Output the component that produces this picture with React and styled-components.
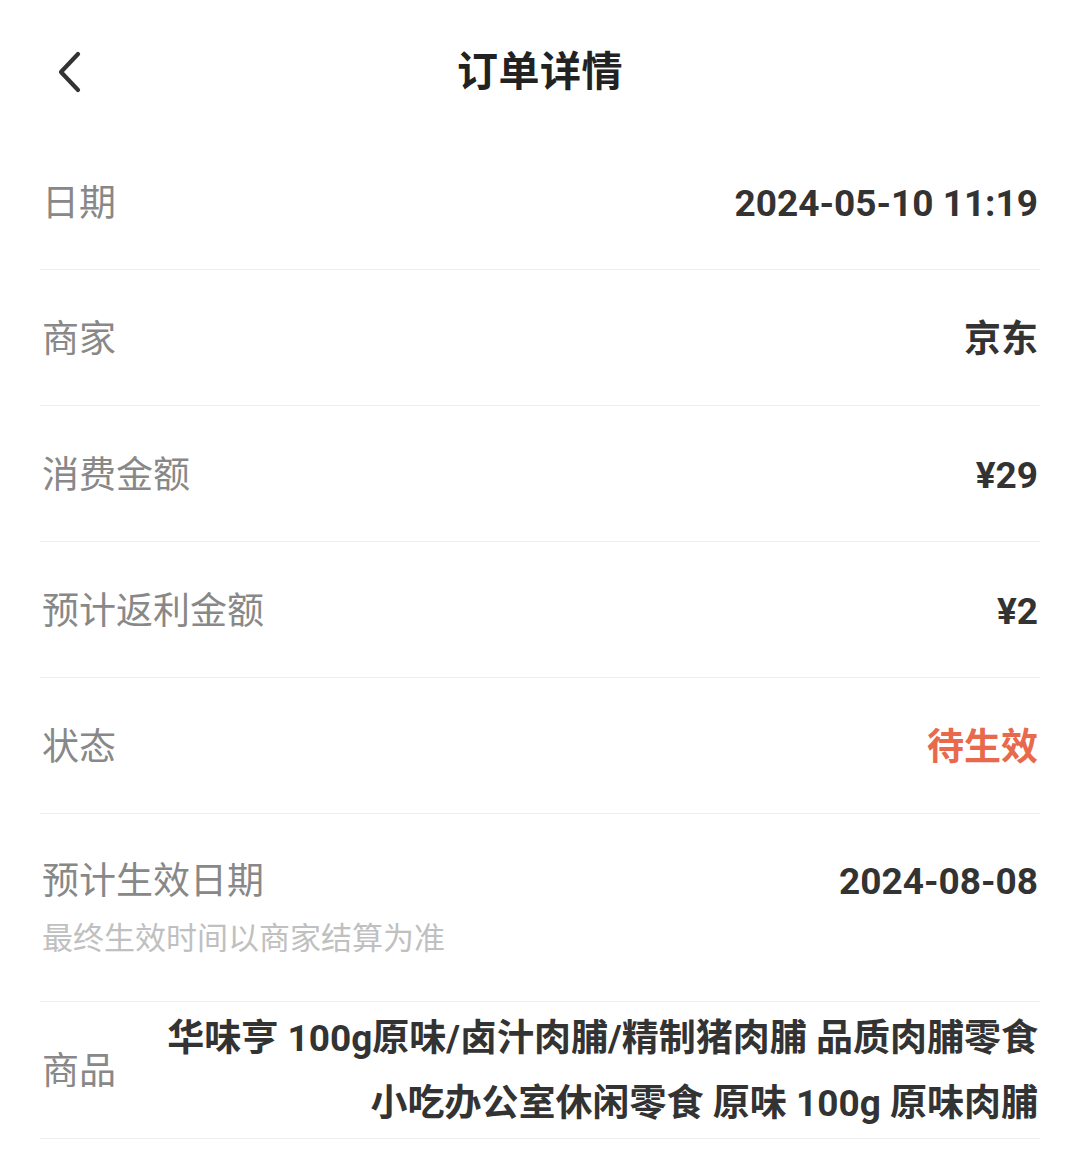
import React from 'react'
import styled, { createGlobalStyle } from 'styled-components'

const GlobalStyle = createGlobalStyle`
    html, body {
        margin: 0;
        padding: 0;
        background: #fff;
    }
    body {
        font-family: Roboto, "Noto Sans CJK SC", sans-serif;
        -webkit-font-smoothing: antialiased;
    }
`

const Page = styled.div`
    width: 1080px;
    min-height: 1176px;
    background: #fff;
`

const Header = styled.header`
    position: relative;
    height: 134px;
    display: flex;
    align-items: flex-start;
    justify-content: center;
`

const BackButton = styled.button`
    position: absolute;
    left: 44px;
    top: 42px;
    width: 50px;
    height: 60px;
    padding: 0;
    border: 0;
    background: none;
    display: flex;
    align-items: center;
    justify-content: center;
    cursor: pointer;
`

const Title = styled.h1`
    margin: 0;
    padding-top: 45px;
    font-size: 41px;
    line-height: 54px;
    font-weight: 600;
    color: #222;
    letter-spacing: 0.5px;
`

const List = styled.div`
    margin: 0 40px;
`

const Row = styled.div`
    display: flex;
    align-items: ${({ top }) => (top ? 'flex-start' : 'center')};
    justify-content: space-between;
    min-height: ${({ tall }) => (tall ? '188px' : '136px')};
    border-bottom: 1px solid #eeeeee;
    box-sizing: border-box;
    padding: ${({ top }) => (top ? '44px 2px 0 2px' : '4px 2px 0 2px')};
    gap: 48px;
`

const LabelBox = styled.div`
    display: flex;
    flex-direction: column;
    flex-shrink: 0;
`

const Label = styled.span`
    font-size: 37px;
    line-height: 48px;
    color: #888;
    font-weight: 400;
`

const Note = styled.span`
    margin-top: 13px;
    font-size: 31px;
    line-height: 40px;
    color: #c0c0c0;
`

const Value = styled.span`
    font-size: 37px;
    line-height: 48px;
    font-weight: 700;
    color: ${({ accent }) => (accent ? '#e8694b' : '#333')};
    text-align: right;
`

const Product = styled.span`
    flex: 1;
    font-size: 37px;
    line-height: 65px;
    font-weight: 700;
    color: #333;
    text-align: right;
    padding: 0 0 2px;
`

const ChevronLeft = () => (
    <svg width="26" height="42" viewBox="0 0 26 42" fill="none">
        <path d="M22 3 L5 21 L22 39" stroke="#333" strokeWidth="4.2" strokeLinecap="round" strokeLinejoin="round" />
    </svg>
)

const rows = [
    { label: '日期', value: '2024-05-10 11:19' },
    { label: '商家', value: '京东' },
    { label: '消费金额', value: '¥29' },
    { label: '预计返利金额', value: '¥2' },
    { label: '状态', value: '待生效', accent: true },
]

export default function App() {
    return (
        <Page>
            <GlobalStyle />
            <Header>
                <BackButton aria-label="返回">
                    <ChevronLeft />
                </BackButton>
                <Title>订单详情</Title>
            </Header>
            <List>
                {rows.map(({ label, value, accent }) => (
                    <Row key={label}>
                        <Label>{label}</Label>
                        <Value accent={accent}>{value}</Value>
                    </Row>
                ))}
                <Row tall top>
                    <LabelBox>
                        <Label>预计生效日期</Label>
                        <Note>最终生效时间以商家结算为准</Note>
                    </LabelBox>
                    <Value>2024-08-08</Value>
                </Row>
                <Row>
                    <Label>商品</Label>
                    <Product>华味亨 100g原味/卤汁肉脯/精制猪肉脯 品质肉脯零食小吃办公室休闲零食 原味 100g 原味肉脯</Product>
                </Row>
            </List>
        </Page>
    )
}
